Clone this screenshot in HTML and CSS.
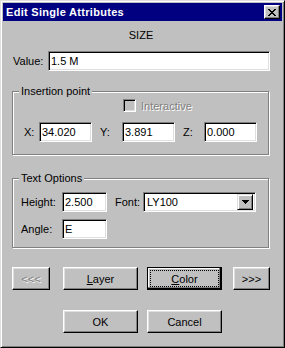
FILE: index.html
```html
<!DOCTYPE html>
<html lang="en">
<head>
    <meta charset="UTF-8">
    <meta name="viewport" content="width=device-width, initial-scale=1.0">
    <title>Edit Single Attributes</title>
    <link rel="stylesheet" href="styles.css">
</head>
<body>
    <div class="window">
        <div class="titlebar">
            <span class="title">Edit Single Attributes</span>
            <button class="close-btn" aria-label="Close">
                <svg width="8" height="7" viewBox="0 0 8 7" shape-rendering="crispEdges">
                    <path d="M0 0h2v1H0zM6 0h2v1H6zM1 1h2v1H1zM5 1h2v1H5zM2 2h4v1H2zM3 3h2v1H3zM2 4h4v1H2zM1 5h2v1H1zM5 5h2v1H5zM0 6h2v1H0zM6 6h2v1H6z" fill="#000"/>
                </svg>
            </button>
        </div>

        <div class="content">
            <div class="tag-name">SIZE</div>

            <div class="value-row">
                <label class="value-label" for="value">Value:</label>
                <input class="field value-field" type="text" id="value" value="1.5 M">
            </div>

            <fieldset class="group">
                <legend>Insertion point</legend>
                <div class="check-row">
                    <span class="checkbox"></span>
                    <span class="disabled-text">Interactive</span>
                </div>
                <div class="coord-row">
                    <label class="coord-label label-x" for="coordX">X:</label>
                    <input class="field coord" type="text" id="coordX" value="34.020">
                    <label class="coord-label label-y" for="coordY">Y:</label>
                    <input class="field coord" type="text" id="coordY" value="3.891">
                    <label class="coord-label label-z" for="coordZ">Z:</label>
                    <input class="field coord" type="text" id="coordZ" value="0.000">
                </div>
            </fieldset>

            <fieldset class="group group-text">
                <legend>Text Options</legend>
                <div class="opt-row">
                    <label class="opt-label" for="height">Height:</label>
                    <input class="field opt-field" type="text" id="height" value="2.500">
                    <span class="font-label">Font:</span>
                    <div class="field combo">
                        <span class="combo-text">LY100</span>
                        <span class="combo-btn">
                            <svg width="7" height="4" viewBox="0 0 7 4" shape-rendering="crispEdges">
                                <path d="M0 0h7v1H0zM1 1h5v1H1zM2 2h3v1H2zM3 3h1v1H3z" fill="#000"/>
                            </svg>
                        </span>
                    </div>
                </div>
                <div class="opt-row">
                    <label class="opt-label" for="angle">Angle:</label>
                    <input class="field opt-field" type="text" id="angle" value="E">
                </div>
            </fieldset>

            <div class="nav-row">
                <button class="btn btn-arrow btn-disabled">&lt;&lt;&lt;</button>
                <button class="btn btn-layer"><u>L</u>ayer</button>
                <button class="btn btn-default btn-color"><span class="focus-ring"><u>C</u>olor</span></button>
                <button class="btn btn-arrow btn-next">&gt;&gt;&gt;</button>
            </div>

            <div class="action-row">
                <button class="btn">OK</button>
                <button class="btn">Cancel</button>
            </div>
        </div>
    </div>
</body>
</html>
```

FILE: styles.css
```css
* {
    margin: 0;
    padding: 0;
    box-sizing: border-box;
}

body {
    background-color: #c0c0c0;
    font-family: 'Liberation Sans', Arial, sans-serif;
    font-size: 11px;
    color: #000;
}

.window {
    width: 285px;
    height: 348px;
    padding: 2px;
    background-color: #c0c0c0;
    border: 1px solid;
    border-color: #dfdfdf #000 #000 #dfdfdf;
    box-shadow: inset 1px 1px #fff, inset -1px -1px #808080;
}

/* title bar */
.titlebar {
    display: flex;
    align-items: center;
    height: 18px;
    padding-left: 3px;
    background-color: #000080;
    color: #fff;
}

.title {
    flex: 1;
    font-weight: bold;
    letter-spacing: 0.3px;
    line-height: 18px;
}

.close-btn {
    display: flex;
    align-items: center;
    justify-content: center;
    width: 16px;
    height: 14px;
    margin-right: 2px;
    background-color: #c0c0c0;
    border: 1px solid;
    border-color: #fff #000 #000 #fff;
    box-shadow: inset -1px -1px #808080, inset 1px 1px #dfdfdf;
}

.close-btn svg {
    display: block;
}

/* body of dialog */
.content {
    padding: 0 12px 0 9px;
}

.tag-name {
    margin-top: 8px;
    line-height: 13px;
    text-align: center;
}

.value-row {
    display: flex;
    align-items: center;
    height: 20px;
    margin-top: 9px;
    padding-left: 1px;
}

.value-label {
    width: 35px;
}

.field {
    height: 20px;
    padding: 0 2px;
    background-color: #fff;
    border: 1px solid;
    border-color: #808080 #fff #fff #808080;
    box-shadow: inset 1px 1px #000, inset -1px -1px #dfdfdf;
    font: inherit;
    color: #000;
    outline: none;
}

.value-field {
    flex: 1;
    min-width: 0;
}

/* group boxes */
.group {
    width: 257px;
    min-width: 0;
    margin-top: 14px;
    padding: 0;
    border: 1px solid #808080;
    box-shadow: inset 1px 1px #fff, 1px 1px #fff;
}

.group legend {
    margin-left: 6px;
    padding: 0 2px;
    line-height: 13px;
    background-color: #c0c0c0;
}

.group-text {
    margin-top: 17px;
    padding-bottom: 8px;
}

.check-row {
    display: flex;
    align-items: center;
    gap: 5px;
    height: 13px;
    margin: 1px 0 0 110px;
}

.checkbox {
    width: 13px;
    height: 13px;
    background-color: #c0c0c0;
    border: 1px solid;
    border-color: #808080 #fff #fff #808080;
    box-shadow: inset 1px 1px #000, inset -1px -1px #dfdfdf;
}

.disabled-text {
    color: #808080;
    text-shadow: 1px 1px #fff;
}

.coord-row {
    display: flex;
    align-items: center;
    margin: 10px 0 12px;
    padding-left: 11px;
}

.coord-label {
    width: 22px;
    margin-left: 8px;
}

.label-x {
    width: 15px;
    margin-left: 0;
}

.label-z {
    width: 21px;
}

.coord {
    width: 53px;
}

.opt-row {
    display: flex;
    align-items: center;
    height: 20px;
    margin-top: 7px;
    padding-left: 8px;
}

.opt-label {
    width: 41px;
}

.opt-field {
    width: 45px;
}

.font-label {
    width: 28px;
    margin-left: 8px;
}

.combo {
    display: flex;
    align-items: center;
    width: 113px;
    padding: 2px;
}

.combo-text {
    flex: 1;
    padding-left: 1px;
}

.combo-btn {
    display: flex;
    align-items: center;
    justify-content: center;
    width: 16px;
    height: 16px;
    background-color: #c0c0c0;
    border: 1px solid;
    border-color: #dfdfdf #000 #000 #dfdfdf;
    box-shadow: inset 1px 1px #fff, inset -1px -1px #808080;
}

.combo-btn svg {
    display: block;
}

/* buttons */
.btn {
    width: 75px;
    height: 23px;
    background-color: #c0c0c0;
    border: 1px solid;
    border-color: #fff #000 #000 #fff;
    box-shadow: inset -1px -1px #808080, inset 1px 1px #dfdfdf;
    font: inherit;
    color: #000;
}

.btn-default {
    display: flex;
    padding: 2px;
    border-color: #000;
    box-shadow: inset -1px -1px #000, inset -2px -2px #808080, inset 1px 1px #fff;
}

.focus-ring {
    display: flex;
    align-items: center;
    justify-content: center;
    flex: 1;
    border: 1px dotted #000;
}

.btn-arrow {
    width: 38px;
}

.btn-disabled {
    color: #808080;
    text-shadow: 1px 1px #fff;
}

.nav-row {
    display: flex;
    margin-top: 19px;
}

.btn-layer {
    margin-left: 13px;
}

.btn-color {
    margin-left: 9px;
}

.btn-next {
    width: 37px;
    margin-left: 11px;
}

.action-row {
    display: flex;
    gap: 9px;
    margin-top: 20px;
    padding-left: 51px;
}
```
